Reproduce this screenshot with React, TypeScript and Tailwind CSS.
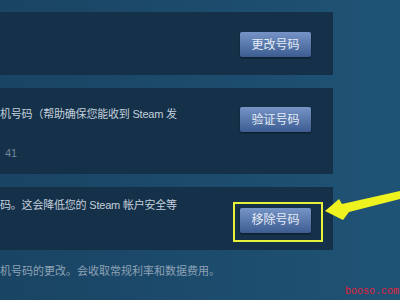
import React from 'react';

const font = { fontFamily: '"Liberation Sans", "Noto Sans CJK SC", sans-serif' };

const SteamButton = ({ label }: { label: string }) => (
  <button className="w-[71px] h-[25px] rounded-[2px] bg-gradient-to-b from-[#7694c6] to-[#3d5d92] text-[12px] text-[#e4ebf5] shadow-[0_1px_2px_rgba(0,0,0,0.5)]">
    {label}
  </button>
);

export default function App() {
  return (
    <div
      className="relative w-[400px] h-[300px] overflow-hidden bg-gradient-to-r from-[#1a4463] via-[#1c4b6c] to-[#1f5375] pt-[12px]"
      style={font}
    >
      <div className="flex flex-col gap-[13px] w-[333px]">
        <div className="h-[63px] bg-[#15314a] flex items-center justify-end pr-[22px] pt-[2px]">
          <SteamButton label="更改号码" />
        </div>

        <div className="h-[86px] bg-[#15314a] flex justify-between pr-[22px] pt-[19px]">
          <div className="flex flex-col">
            <span className="text-[11px] leading-[14px] text-[#c3cfdb] whitespace-nowrap tracking-[-0.2px]">
              机号码（帮助确保您能收到 Steam 发
            </span>
            <span className="text-[11px] leading-[14px] text-[#6f8599] mt-[25px] pl-[5px]">41</span>
          </div>
          <SteamButton label="验证号码" />
        </div>

        <div className="relative h-[63px] bg-[#15314a] flex justify-between pr-[22px] pt-[11px]">
          <span className="text-[11px] leading-[14px] text-[#c3cfdb] whitespace-nowrap tracking-[-0.2px]">
            码。这会降低您的 Steam 帐户安全等
          </span>
          <div className="mt-[9px]">
            <SteamButton label="移除号码" />
          </div>
          <div className="absolute left-[233px] top-[15px] w-[90px] h-[40px] border-[2px] border-[#e6f23a]" />
        </div>
      </div>

      <div className="mt-[14px] text-[11px] leading-[14px] text-[#8ea2b6] whitespace-nowrap">
        机号码的更改。会收取常规利率和数据费用。
      </div>

      <svg className="absolute left-0 top-0" width="400" height="300" viewBox="0 0 400 300">
        <polygon
          points="325,211 339,199 342,204 400,191 400,199 349,212 343,220"
          fill="#eef21e"
        />
      </svg>

      <span
        className="absolute left-[345px] top-[286px] text-[10px] leading-[12px] text-[#e0203c] whitespace-nowrap"
        style={{ fontFamily: '"Liberation Mono", monospace' }}
      >
        booso.com
      </span>
    </div>
  );
}
